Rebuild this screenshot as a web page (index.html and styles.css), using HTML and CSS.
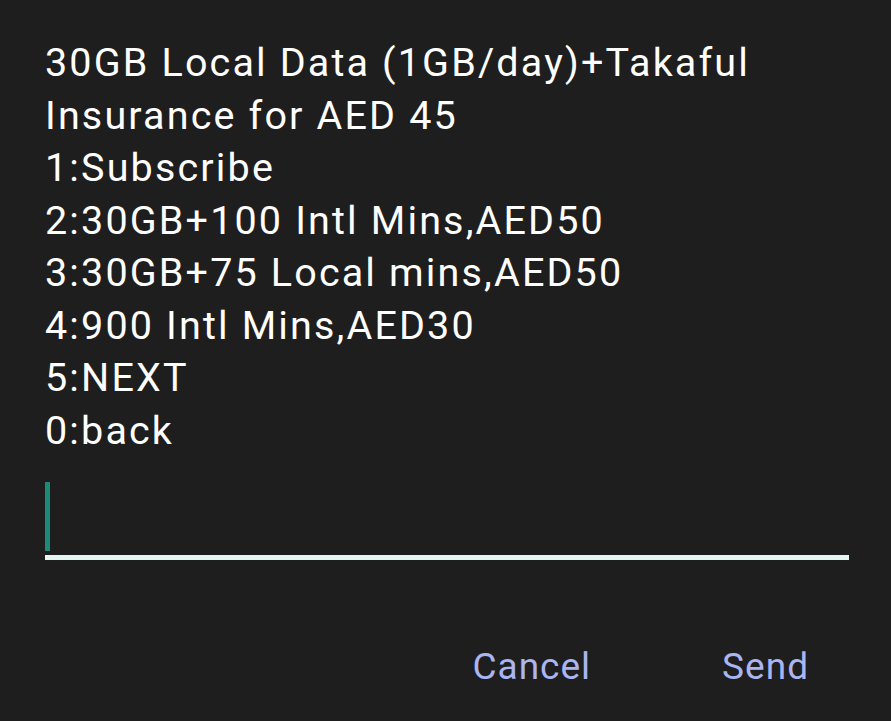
FILE: index.html
```html
<!DOCTYPE html>
<html lang="en">
<head>
<meta charset="utf-8">
<title>USSD</title>
<link rel="stylesheet" href="styles.css">
</head>
<body>
<div class="dialog">
  <div class="message">
    <div>30GB Local Data (1GB/day)+Takaful</div>
    <div>Insurance for AED 45</div>
    <div>1:Subscribe</div>
    <div>2:30GB+100 Intl Mins,AED50</div>
    <div>3:30GB+75 Local mins,AED50</div>
    <div>4:900 Intl Mins,AED30</div>
    <div>5:NEXT</div>
    <div>0:back</div>
  </div>
  <div class="input">
    <span class="cursor"></span>
  </div>
  <div class="actions">
    <span class="btn">Cancel</span>
    <span class="btn">Send</span>
  </div>
</div>
</body>
</html>
```
FILE: styles.css
```css
html, body {
  margin: 0;
  padding: 0;
  background: #1e1e1e;
}
body {
  width: 891px;
  height: 721px;
  overflow: hidden;
  font-family: Roboto, "Noto Sans", sans-serif;
}
.dialog {
  padding: 37px 42px 0 45px;
}
.message {
  color: #ffffff;
  font-size: 39.5px;
  line-height: 52.5px;
  letter-spacing: 2.15px;
}
.input {
  margin-top: 25px;
  height: 73px;
  border-bottom: 5px solid #e4f6f1;
  width: 804px;
  box-sizing: content-box;
}
.cursor {
  display: block;
  width: 5px;
  height: 69px;
  background: #1d8a77;
}
.actions {
  display: flex;
  justify-content: flex-end;
  gap: 131px;
  padding-right: 40px;
  margin-top: 81px;
}
.btn {
  color: #aab5f1;
  font-size: 37px;
  line-height: 52px;
  letter-spacing: 1px;
}
```
